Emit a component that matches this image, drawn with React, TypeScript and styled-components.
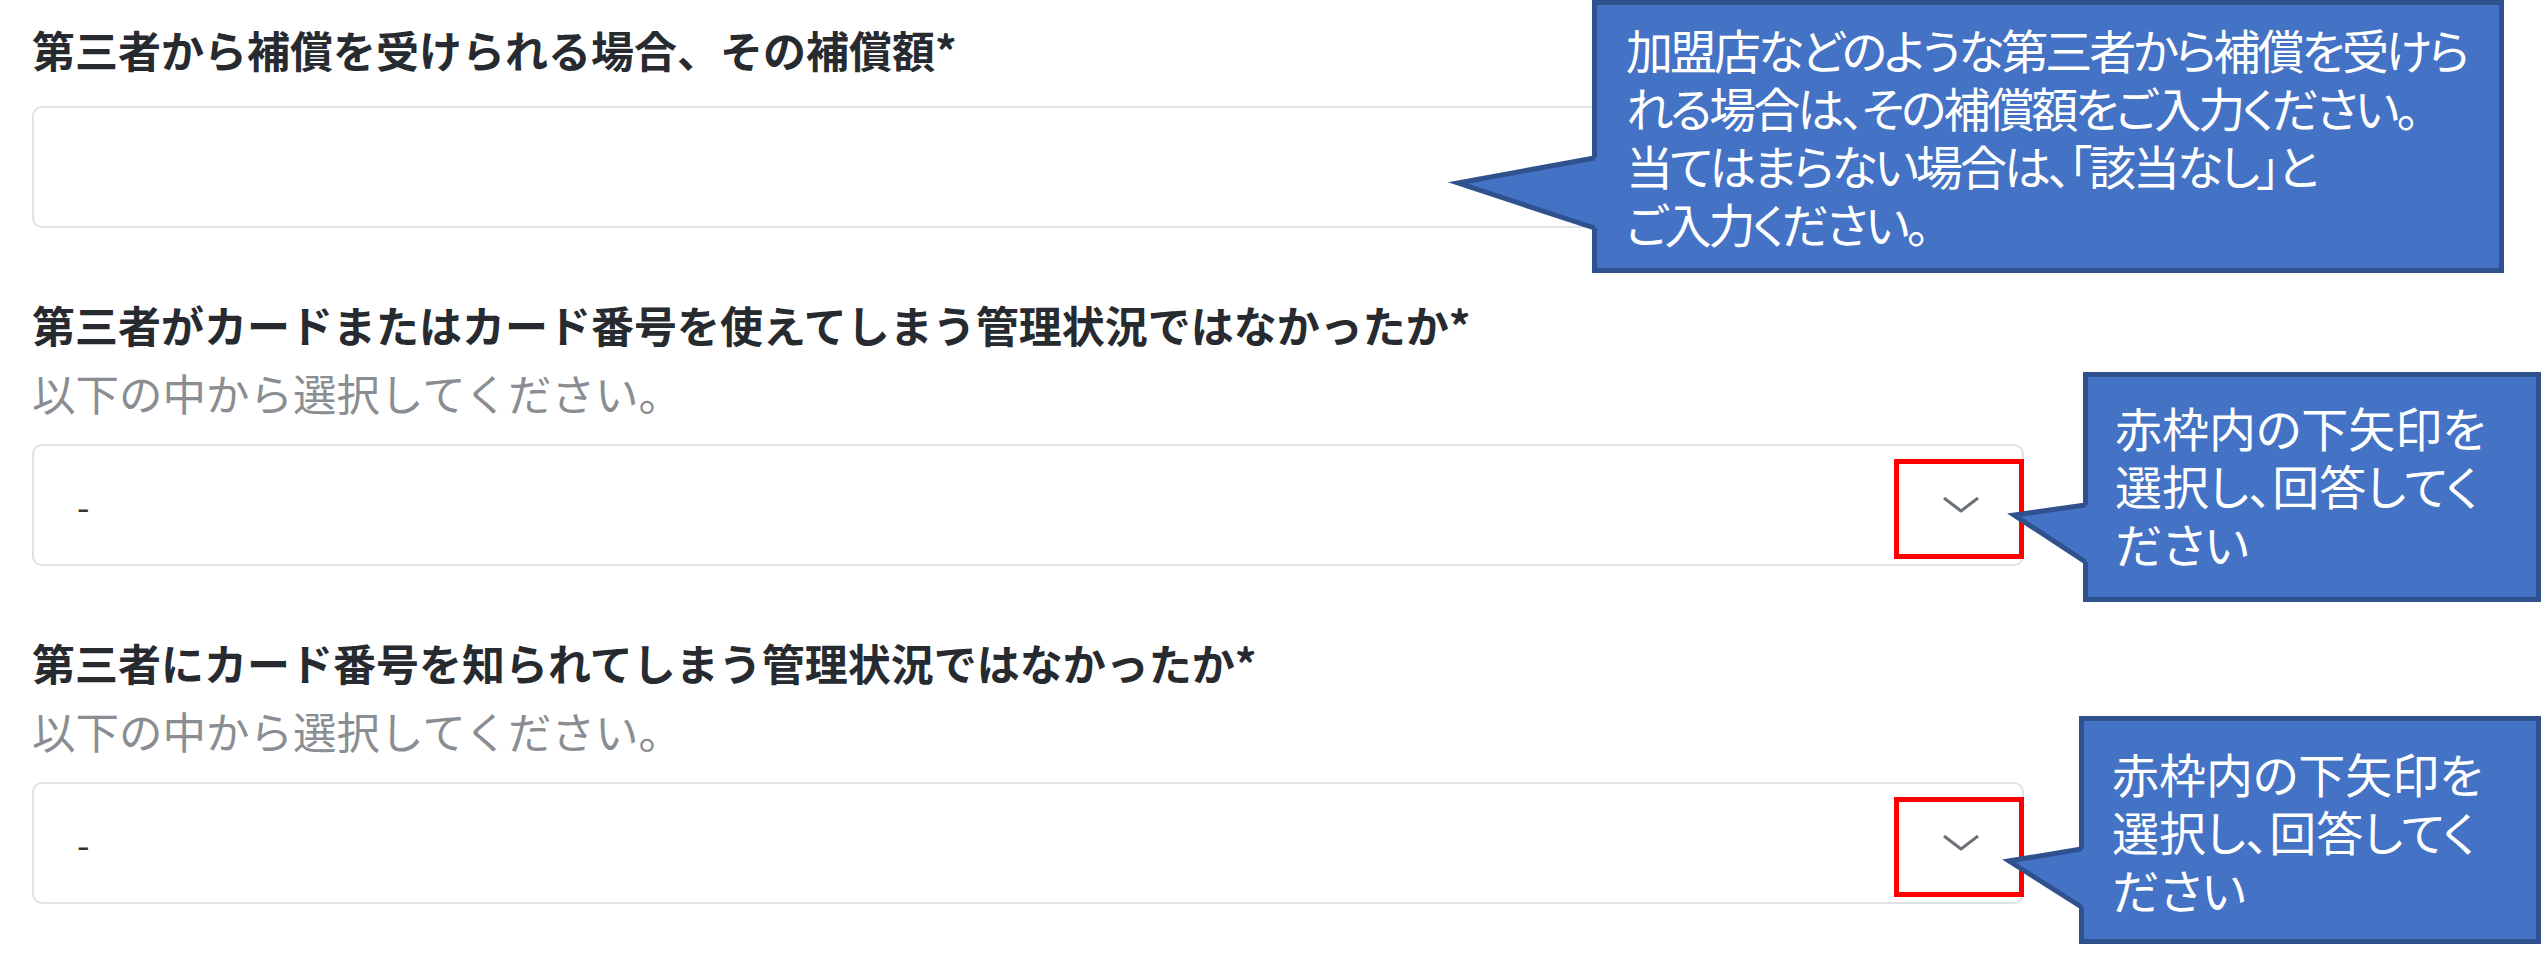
import styled, { createGlobalStyle } from 'styled-components';

const GlobalStyle = createGlobalStyle`
  html, body {
    margin: 0;
    padding: 0;
    background: #fff;
  }
  body {
    font-family: "Noto Sans CJK JP", "Noto Sans", sans-serif;
  }
`;

type Note = {
  x: number;
  y: number;
  w: number;
  h: number;
  padTop: number;
  padLeft: number;
  tracking: number;
  tail: { dx: number; tipY: number; top: number; bottom: number };
  lines: string[];
};

const NOTES: Note[] = [
  {
    x: 1592,
    y: 0,
    w: 912,
    h: 273,
    padTop: 15,
    padLeft: 29,
    tracking: -3,
    tail: { dx: 143, tipY: 183, top: 158, bottom: 228 },
    lines: [
      '加盟店などのような第三者から補償を受けら',
      'れる場合は、その補償額をご入力ください。',
      '当てはまらない場合は、「該当なし」と',
      'ご入力ください。',
    ],
  },
  {
    x: 2083,
    y: 372,
    w: 458,
    h: 230,
    padTop: 21,
    padLeft: 27,
    tracking: 0,
    tail: { dx: 78, tipY: 143, top: 133, bottom: 190 },
    lines: ['赤枠内の下矢印を', '選択し、回答してく', 'ださい'],
  },
  {
    x: 2079,
    y: 716,
    w: 462,
    h: 228,
    padTop: 23,
    padLeft: 28,
    tracking: 0,
    tail: { dx: 79, tipY: 145, top: 133, bottom: 191 },
    lines: ['赤枠内の下矢印を', '選択し、回答してく', 'ださい'],
  },
];

const BORDER = 5;

function Tail({ dx, tipY, top, bottom, h }: Note['tail'] & { h: number }) {
  const pad = 4;
  const x0 = dx + pad;
  const tx = pad + 9;
  const edge = x0 + BORDER / 2;
  return (
    <TailSvg
      $left={-(BORDER + x0)}
      width={x0 + 10}
      height={h}
      viewBox={`0 0 ${x0 + 10} ${h}`}
    >
      <polygon
        points={`${tx},${tipY} ${edge},${top} ${x0 + 7},${top} ${x0 + 7},${bottom} ${edge},${bottom}`}
        fill="#4472c4"
      />
      <polyline
        points={`${edge},${top} ${tx},${tipY} ${edge},${bottom}`}
        fill="none"
        stroke="#2f528f"
        strokeWidth={BORDER}
        strokeMiterlimit={10}
      />
    </TailSvg>
  );
}

function Chevron() {
  return (
    <svg width="38" height="18" viewBox="0 0 38 18">
      <polyline
        points="2,2 19,15 36,2"
        fill="none"
        stroke="#6c7176"
        strokeWidth="3"
        strokeLinejoin="round"
      />
    </svg>
  );
}

function Select() {
  return (
    <Control>
      <Value>-</Value>
      <Chevron />
      <Highlight />
    </Control>
  );
}

function App() {
  return (
    <Page>
      <GlobalStyle />
      <Form>
        <Question>
          <Label>第三者から補償を受けられる場合、その補償額*</Label>
          <Control />
        </Question>
        <Question>
          <Label>第三者がカードまたはカード番号を使えてしまう管理状況ではなかったか*</Label>
          <Hint>以下の中から選択してください。</Hint>
          <Select />
        </Question>
        <Question>
          <Label>第三者にカード番号を知られてしまう管理状況ではなかったか*</Label>
          <Hint>以下の中から選択してください。</Hint>
          <Select />
        </Question>
      </Form>

      {NOTES.map((n, i) => (
        <Callout
          key={i}
          $x={n.x}
          $y={n.y}
          $w={n.w}
          $h={n.h}
          $padTop={n.padTop}
          $padLeft={n.padLeft}
          $tracking={n.tracking}
        >
          <Tail {...n.tail} h={n.h} />
          {n.lines.map(line => (
            <CalloutLine key={line}>{line}</CalloutLine>
          ))}
        </Callout>
      ))}
    </Page>
  );
}

const Page = styled.div`
  position: relative;
  width: 2546px;
  height: 964px;
  box-sizing: border-box;
  padding: 19px 0 0 32px;
  overflow: hidden;
  background: #fff;
`;

const Form = styled.div`
  width: 1992px;
  display: flex;
  flex-direction: column;
  gap: 66px;
`;

const Question = styled.div`
  display: flex;
  flex-direction: column;
`;

const Label = styled.div`
  font-size: 43px;
  font-weight: 700;
  line-height: 60px;
  color: #272b30;
  margin-bottom: 9px;
  white-space: nowrap;
`;

const Hint = styled.div`
  font-size: 43.5px;
  font-weight: 400;
  line-height: 60px;
  color: #8a8d91;
  margin-bottom: 3px;
  white-space: nowrap;
`;

const Control = styled.div`
  position: relative;
  height: 122px;
  margin-top: 18px;
  box-sizing: border-box;
  border: 2px solid #dfe2e6;
  border-radius: 10px;
  background: #fff;
  display: flex;
  align-items: center;
  justify-content: space-between;
  padding: 0 42px 0 43px;
`;

const Value = styled.span`
  font-size: 36px;
  color: #333;
`;

const Highlight = styled.div`
  position: absolute;
  right: -2px;
  top: 13px;
  width: 130px;
  height: 100px;
  box-sizing: border-box;
  border: 5px solid #ff0000;
`;

const Callout = styled.div<{
  $x: number;
  $y: number;
  $w: number;
  $h: number;
  $padTop: number;
  $padLeft: number;
  $tracking: number;
}>`
  position: absolute;
  left: ${p => p.$x}px;
  top: ${p => p.$y}px;
  width: ${p => p.$w}px;
  height: ${p => p.$h}px;
  box-sizing: border-box;
  padding: ${p => p.$padTop}px 0 0 ${p => p.$padLeft}px;
  background: #4472c4;
  border: ${BORDER}px solid #2f528f;
  color: #fff;
  font-size: 47px;
  line-height: 58px;
  letter-spacing: ${p => p.$tracking}px;
  font-feature-settings: "palt";
  white-space: nowrap;
`;

const CalloutLine = styled.div`
  position: relative;
  z-index: 1;
`;

const TailSvg = styled.svg<{ $left: number }>`
  position: absolute;
  left: ${p => p.$left}px;
  top: -${BORDER}px;
  overflow: visible;
`;

export default App;
